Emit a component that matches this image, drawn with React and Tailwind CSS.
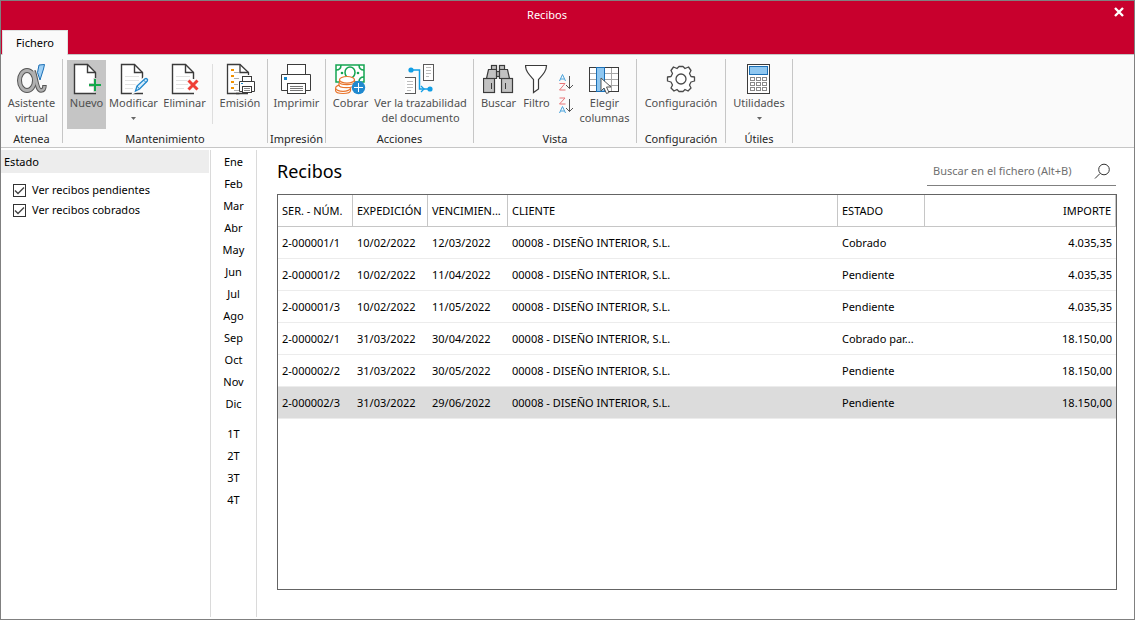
import React from "react";

const INK = "#3b3b3b";

function Icon({ x = 0, w = 32, h = 32, children }) {
  return (
    <svg width={w} height={h} viewBox={`${x} 0 ${w} ${h}`} fill="none" aria-hidden="true" className="block shrink-0">
      {children}
    </svg>
  );
}

function Page({ lines }) {
  return (
    <>
      <path d="M25.5 16V9.500L17.500 1.500H4.500V30.500H25.500V29" fill="#fff" />
      {lines && <path d="M8 13.500H22M8 17.500H22M8 21.500H20M8 25.500H16" stroke="#e2e2e2" />}
      <path d="M25.500 16V9.500L17.500 1.500H4.500V30.500H26" stroke={INK} strokeWidth="1.400" />
      <path d="M17.500 1.500V9.500H25.500" stroke={INK} strokeWidth="1.400" />
    </>
  );
}

function AlphaIcon() {
  return (
    <Icon>
      <g stroke="#555">
        <ellipse cx="11" cy="17.500" rx="7.500" ry="10" strokeWidth="5" />
        <path d="M17.500 8C20 13 20.500 27.500 25 27.500C27.500 27.500 28.500 25 28.500 22" strokeWidth="4.500" />
      </g>
      <g stroke="#b0b0b0">
        <ellipse cx="11" cy="17.500" rx="7.500" ry="10" strokeWidth="3" />
        <path d="M17.500 8C20 13 20.500 27.500 25 27.500C27.500 27.500 28.500 25 28.500 23" strokeWidth="2.500" />
      </g>
      <path d="M23 2L28.500 1.500L27.500 6L24 17L21.500 9.500Z" fill="#9fd0f5" stroke="#1b6fb5" />
    </Icon>
  );
}

function NewIcon() {
  return (
    <Icon w={33}>
      <Page />
      <path d="M25.500 15V29M19 22H32" stroke="#c5c5c5" strokeWidth="4" />
      <path d="M25 16V28M19 22H31" stroke="#14a84b" strokeWidth="2" />
    </Icon>
  );
}

function EditIcon() {
  return (
    <Icon w={33}>
      <Page lines />
      <path d="M18 28L20 23L28 15.500C29.500 14.500 31.500 16.500 30.500 18L22.500 26Z" fill="#fff" stroke="#fafafa" strokeWidth="4" />
      <path d="M18.500 28L20 23L28 15.800C29.500 14.800 31.300 16.500 30.300 18L22.500 26Z" fill="#d8edfb" stroke="#1f87cc" strokeWidth="1.300" />
      <path d="M20 23L22.500 26M26.500 17L29 19.500" stroke="#1f87cc" />
    </Icon>
  );
}

function DeleteIcon() {
  return (
    <Icon w={33}>
      <Page lines />
      <path d="M20 17L30 27M30 17L20 27" stroke="#fafafa" strokeWidth="6" />
      <path d="M20.500 17.500L29.500 26.500M29.500 17.500L20.500 26.500" stroke="#ef3e36" strokeWidth="3" />
    </Icon>
  );
}

function IssueIcon() {
  return (
    <Icon>
      <path d="M15.500 30.500H3.500V1.500H16L24.500 9.500V12" fill="#fff" stroke={INK} strokeWidth="1.300" />
      <path d="M16 1.500V9.500H24.500M12 30.500H24" stroke={INK} strokeWidth="1.300" />
      <path d="M7 7H10M7 13H10M7 19H10M7 25H10" stroke="#f39200" strokeWidth="2" />
      <path d="M10 9.500H15M10 15.500H15M10 21.500H14M10 27.500H15" stroke="#b0b0b0" />
      <rect x="18.500" y="13.500" width="9" height="5" fill="#fff" stroke={INK} />
      <path d="M15.500 18.500H30.500V28.500H27.500V23.500H18.500V28.500H15.500Z" fill="#fff" stroke={INK} />
      <rect x="18.500" y="23.500" width="9" height="6" fill="#fff" stroke={INK} />
      <path d="M20 25.500H26M20 27.500H26" stroke="#888" />
      <path d="M17 20.500H19" stroke="#1b87c9" />
    </Icon>
  );
}

function PrintIcon() {
  return (
    <Icon x={1}>
      <rect x="7.500" y="1.500" width="18" height="10" fill="#fff" stroke={INK} />
      <path d="M1.500 11.500H30.500V27.500H1.500Z" fill="#fff" stroke={INK} />
      <rect x="7.500" y="20.500" width="18" height="10" fill="#fff" stroke={INK} />
      <path d="M10 23.500H23M10 25.500H23M10 27.500H23" stroke="#777" />
      <rect x="4" y="14" width="3" height="3" fill="#1686cc" />
    </Icon>
  );
}

function CashIcon() {
  return (
    <Icon x={1}>
      <rect x="2" y="2" width="28" height="17" fill="#fff" stroke="#14a551" strokeWidth="1.500" />
      <path d="M2 7C5 7 7 5 7 2M25 2C25 5 27 7 30 7M30 14C27 14 25 16 25 19" stroke="#14a551" strokeWidth="1.500" />
      <ellipse cx="16" cy="9.500" rx="5" ry="5.500" stroke="#14a551" strokeWidth="1.500" />
      <circle cx="8" cy="10" r="1.300" fill="#14a551" />
      <circle cx="24" cy="10" r="1.300" fill="#14a551" />
      <g fill="#fff" stroke="#e8742c" strokeWidth="1.200">
        <path d="M1.600 25V27.500C1.600 31.500 16.500 31.500 16.500 27.500V25" />
        <ellipse cx="9" cy="25" rx="7.400" ry="3.300" />
        <path d="M5 20V22C5 25.500 20 25.500 20 22V20" />
        <path d="M5.500 17V19C5.500 22.500 20.500 22.500 20.500 19V17" />
        <ellipse cx="13" cy="16.800" rx="7.500" ry="3.300" />
      </g>
      <circle cx="24.500" cy="24.500" r="6.700" fill="#2089cf" />
      <path d="M24.500 20V29M20 24.500H29" stroke="#fff" />
    </Icon>
  );
}

function TraceIcon() {
  return (
    <Icon x={2}>
      <rect x="20.500" y="1.500" width="10" height="16" fill="#fff" stroke="#5a5a5a" />
      <rect x="1.500" y="14.500" width="11" height="16" fill="#fff" stroke="#5a5a5a" />
      <path d="M23 4.500H28M23 7.500H28M23 10.500H28M23 13.500H26M4 18.500H10M4 21.500H10M4 24.500H10M4 27.500H8" stroke="#bdbdbd" />
      <path d="M8 7H16.500V26H20" stroke="#119ee5" strokeWidth="1.500" />
      <path d="M18 23L21 26L18 29" stroke="#119ee5" strokeWidth="1.300" />
      <circle cx="8" cy="7" r="2.600" fill="#119ee5" />
      <circle cx="27" cy="26" r="2.600" fill="#119ee5" />
      <path d="M21 26H25" stroke="#119ee5" strokeWidth="1.500" />
    </Icon>
  );
}

function BinocularsIcon() {
  return (
    <Icon x={2}>
      <g fill="#c2c2c2" stroke={INK} strokeWidth="1.200">
        <rect x="10.500" y="2.500" width="5" height="4" />
        <rect x="18.500" y="2.500" width="5" height="4" />
        <rect x="15.500" y="8.500" width="3" height="5" />
        <path d="M7.500 6.500H15.500V15.500H5.500Z" />
        <path d="M18.500 6.500H26.500L28.500 15.500H18.500Z" />
        <rect x="2.500" y="15.500" width="11" height="14" />
        <rect x="20.500" y="15.500" width="11" height="14" />
      </g>
      <path d="M10.500 20V26M24.500 20V26" stroke={INK} />
    </Icon>
  );
}

function FunnelIcon() {
  return (
    <Icon x={1} w={24}>
      <path d="M1.500 2.500H22.500C22.500 8 19 11.500 14.500 16.500V26L9.500 29.500V16.500C5 11.500 1.500 8 1.500 2.500Z" fill="#fff" stroke={INK} strokeWidth="1.200" />
    </Icon>
  );
}

function SortIcon({ down }) {
  return (
    <Icon w={17} h={17}>
      {down ? (
        <>
          <path d="M1.500 1H7L1.500 7H7.500" stroke="#e87579" />
          <path d="M1.500 16L4.500 9.500L7.500 16M2.500 14H6.500" stroke="#4aa3dc" />
        </>
      ) : (
        <>
          <path d="M1.500 7L4.500 .5L7.500 7M2.500 5H6.500" stroke="#4aa3dc" />
          <path d="M1.500 9.500H7L1.500 16H7.500" stroke="#e87579" />
        </>
      )}
      <path d="M11.500 2V14.500M8 11L11.500 14.500L15 11" stroke="#555" />
    </Icon>
  );
}

function ColumnsIcon() {
  return (
    <Icon x={1}>
      <rect x="1.500" y="4.500" width="29" height="24" fill="#fff" />
      <path d="M2 10.500H30M2 16.500H30M2 22.500H30M16.500 4V28M23.500 4V28" stroke="#a8a8a8" />
      <rect x="1.500" y="4.500" width="29" height="24" stroke={INK} />
      <rect x="8.500" y="4.500" width="8" height="24" fill="#8fc7f0" stroke="#1b6fb5" />
      <path d="M13 15L23 24H18.500L21 29.500L18.500 30.500L16 25L13 28Z" fill="#fff" stroke="#555" />
    </Icon>
  );
}

function GearIcon() {
  return (
    <Icon>
      <path
        d="M8.500 4L12 5.500L14 3.500H18L20 5.500L23.500 4L26 7.500L24.500 10.500L26 13.500L29.500 14V18L26 19L24.500 22L26 25L23 28L20 26.500L18 28.500H14L12 26.500L9 28L6 25L7.500 22L6 19L2.500 18V14L6 13.500L7.500 10.500L6 7.500Z"
        fill="#fff"
        stroke="#4a4a4a"
        strokeWidth="1.300"
        strokeLinejoin="round"
      />
      <circle cx="16" cy="16" r="5" stroke="#4a4a4a" strokeWidth="1.300" />
    </Icon>
  );
}

function CalculatorIcon() {
  return (
    <Icon w={24}>
      <rect x=".5" y="1.500" width="22" height="29" fill="#fff" stroke={INK} />
      <rect x="2.500" y="3.500" width="18" height="8" fill="#8fc7f0" stroke="#1b6fb5" />
      <g stroke="#888">
        {[14.500, 19.500, 24.500].map((y) =>
          [3.500, 9.500, 15.500].map((x) => <rect key={`${x}-${y}`} x={x} y={y} width="4" height="3" />)
        )}
      </g>
    </Icon>
  );
}

function Tool({ icon, label, menu, active, className }) {
  return (
    <button
      type="button"
      className={`flex h-[69px] shrink-0 flex-col items-center pt-[3px] text-center leading-[15px] whitespace-pre text-[#505050] ${active ? "bg-[#c5c5c5]" : "hover:bg-[#e6e6e6]"} ${className}`}
    >
      {icon}
      <span>{label}</span>
      {menu && (
        <svg width="5" height="3" viewBox="0 0 5 3" aria-hidden="true" className="mt-[7px]">
          <path d="M0 0H5L2.500 3Z" fill="#666" />
        </svg>
      )}
    </button>
  );
}

function Group({ title, className, children }) {
  return (
    <>
      <section aria-label={title} className={`flex shrink-0 flex-col pt-[5px] ${className}`}>
        <div className="flex justify-center">{children}</div>
        <h2 className="mt-0.5 text-center leading-[15px] whitespace-nowrap text-[#262626]">{title}</h2>
      </section>
      <div className="my-1 w-px shrink-0 bg-[#c6c6c6]" />
    </>
  );
}

function Ribbon() {
  return (
    <div className="flex h-[94px] shrink-0 border-y border-[#c6c6c6] bg-[#fafafa]">
      <Group title="Atenea" className="w-[61px]">
        <Tool className="w-[60px]" icon={<AlphaIcon />} label={"Asistente\nvirtual"} />
      </Group>
      <Group title="Mantenimiento" className="w-[204px]">
        <Tool className="w-[39px]" active icon={<NewIcon />} label="Nuevo" />
        <Tool className="w-[55px]" menu icon={<EditIcon />} label="Modificar" />
        <Tool className="w-[47px]" icon={<DeleteIcon />} label="Eliminar" />
        <div className="mx-1 mt-1 h-[60px] w-px bg-[#dedede]" />
        <Tool className="w-[46px]" icon={<IssueIcon />} label="Emisión" />
      </Group>
      <Group title="Impresión" className="w-[57px]">
        <Tool className="w-[54px]" icon={<PrintIcon />} label="Imprimir" />
      </Group>
      <Group title="Acciones" className="w-[147px]">
        <Tool className="w-[42px]" icon={<CashIcon />} label="Cobrar" />
        <Tool className="w-[98px]" icon={<TraceIcon />} label={"Ver la trazabilidad\ndel documento"} />
      </Group>
      <Group title="Vista" className="w-[162px]">
        <Tool className="w-[40px]" icon={<BinocularsIcon />} label="Buscar" />
        <Tool className="w-[36px]" icon={<FunnelIcon />} label="Filtro" />
        <div className="flex w-[23px] flex-col items-center gap-1.5 pt-3.5">
          <button type="button" aria-label="Orden ascendente"><SortIcon /></button>
          <button type="button" aria-label="Orden descendente"><SortIcon down /></button>
        </div>
        <Tool className="w-[54px]" icon={<ColumnsIcon />} label={"Elegir\ncolumnas"} />
      </Group>
      <Group title="Configuración" className="w-[88px]">
        <Tool className="w-[84px]" icon={<GearIcon />} label="Configuración" />
      </Group>
      <Group title="Útiles" className="w-[66px]">
        <Tool className="w-[62px]" menu icon={<CalculatorIcon />} label="Utilidades" />
      </Group>
    </div>
  );
}

function Check({ label }) {
  return (
    <label className="flex h-5 items-center gap-1.5 pl-3">
      <span className="grid size-[13px] place-items-center">
        <input type="checkbox" defaultChecked className="peer col-start-1 row-start-1 size-[13px] appearance-none border border-[#333] bg-white" />
        <svg width="11" height="11" viewBox="0 0 11 11" fill="none" aria-hidden="true" className="pointer-events-none invisible col-start-1 row-start-1 peer-checked:visible">
          <path d="M1 5.500L4 8.500L10 2.500" stroke="#444" strokeWidth="1.400" />
        </svg>
      </span>
      {label}
    </label>
  );
}

const MONTHS = ["Ene", "Feb", "Mar", "Abr", "May", "Jun", "Jul", "Ago", "Sep", "Oct", "Nov", "Dic"];
const QUARTERS = ["1T", "2T", "3T", "4T"];

const CLIENT = "00008 - DISEÑO INTERIOR, S.L.";
const ROWS = [
  ["2-000001/1", "10/02/2022", "12/03/2022", CLIENT, "Cobrado", "4.035,35"],
  ["2-000001/2", "10/02/2022", "11/04/2022", CLIENT, "Pendiente", "4.035,35"],
  ["2-000001/3", "10/02/2022", "11/05/2022", CLIENT, "Pendiente", "4.035,35"],
  ["2-000002/1", "31/03/2022", "30/04/2022", CLIENT, "Cobrado par...", "18.150,00"],
  ["2-000002/2", "31/03/2022", "30/05/2022", CLIENT, "Pendiente", "18.150,00"],
  ["2-000002/3", "31/03/2022", "29/06/2022", CLIENT, "Pendiente", "18.150,00"],
];
const HEADERS = ["SER. - NÚM.", "EXPEDICIÓN", "VENCIMIEN...", "CLIENTE", "ESTADO", "IMPORTE"];

function ReceiptsTable() {
  return (
    <div className="flex-1 border border-[#646464]">
      <table className="w-full table-fixed border-separate border-spacing-0 text-left">
        <colgroup>
          <col className="w-[75px]" />
          <col className="w-[75px]" />
          <col className="w-[80px]" />
          <col />
          <col className="w-[87px]" />
          <col className="w-[191px]" />
        </colgroup>
        <thead>
          <tr>
            {HEADERS.map((h) => (
              <th key={h} scope="col" className="h-8 border-r border-b border-[#c6c6c6] pt-px pl-1 font-normal whitespace-nowrap last:pr-1 last:text-right">
                {h}
              </th>
            ))}
          </tr>
        </thead>
        <tbody>
          {ROWS.map((row, i) => (
            <tr key={row[0]} aria-selected={i === 5} className="aria-selected:bg-[#dcdcdc]">
              {row.map((cell, j) => (
                <td key={j} className="h-8 border-b border-[#ececec] px-1 pt-px whitespace-nowrap last:text-right">
                  {cell}
                </td>
              ))}
            </tr>
          ))}
        </tbody>
      </table>
    </div>
  );
}

export default function App() {
  return (
    <div className="flex min-h-screen flex-col border border-[#808080] bg-white font-['Noto_Sans',sans-serif] text-[11px] text-black">
      <header className="flex h-[53px] shrink-0 flex-col justify-between bg-[#c8002d]">
        <div className="flex h-[29px] items-center">
          <h1 className="flex-1 text-center text-white">Recibos</h1>
          <button type="button" aria-label="Cerrar" className="mb-2 flex w-[41px] justify-end pr-2.5">
            <svg width="10" height="10" viewBox="0 0 10 10" aria-hidden="true">
              <path d="M1 1L9 9M9 1L1 9" stroke="#fff" strokeWidth="2.400" />
            </svg>
          </button>
        </div>
        <nav className="z-10 -mb-px flex pl-px">
          <button type="button" className="h-[25px] w-[66px] border border-b-0 border-[#e0e0e0] bg-[#fafafa]">Fichero</button>
        </nav>
      </header>
      <Ribbon />
      <div className="flex flex-1 pt-0.5">
        <aside className="w-[209px] shrink-0 pr-px">
          <h2 className="h-[23px] bg-[#ededed] pl-[3px] leading-[23px]">Estado</h2>
          <div className="pt-[7px]">
            <Check label="Ver recibos pendientes" />
            <Check label="Ver recibos cobrados" />
          </div>
        </aside>
        <nav aria-label="Periodo" className="mb-0.5 w-[47px] shrink-0 border-x border-[#dadada] pt-px">
          {MONTHS.map((m) => (
            <button key={m} type="button" className="block h-[22px] w-full">{m}</button>
          ))}
          <div className="pt-2">
            {QUARTERS.map((q) => (
              <button key={q} type="button" className="block h-[22px] w-full">{q}</button>
            ))}
          </div>
        </nav>
        <main className="flex min-w-0 flex-1 flex-col pr-[17px] pb-[29px] pl-5">
          <div className="flex h-11 items-start justify-between pr-px">
            <h2 className="text-[18px] leading-[42px]">Recibos</h2>
            <div className="mt-2 flex h-7 w-[189px] items-center border-b border-[#808080] pr-[5px]">
              <input
                type="search"
                aria-label="Buscar en el fichero"
                placeholder="Buscar en el fichero (Alt+B)"
                className="min-w-0 flex-1 pl-1.5 outline-none placeholder:text-[#707070]"
              />
              <svg width="17" height="17" viewBox="0 0 17 17" fill="none" aria-hidden="true">
                <circle cx="10" cy="6.500" r="5.300" stroke="#333" />
                <path d="M6 10.500L1 15.500" stroke="#333" />
              </svg>
            </div>
          </div>
          <ReceiptsTable />
        </main>
      </div>
    </div>
  );
}
